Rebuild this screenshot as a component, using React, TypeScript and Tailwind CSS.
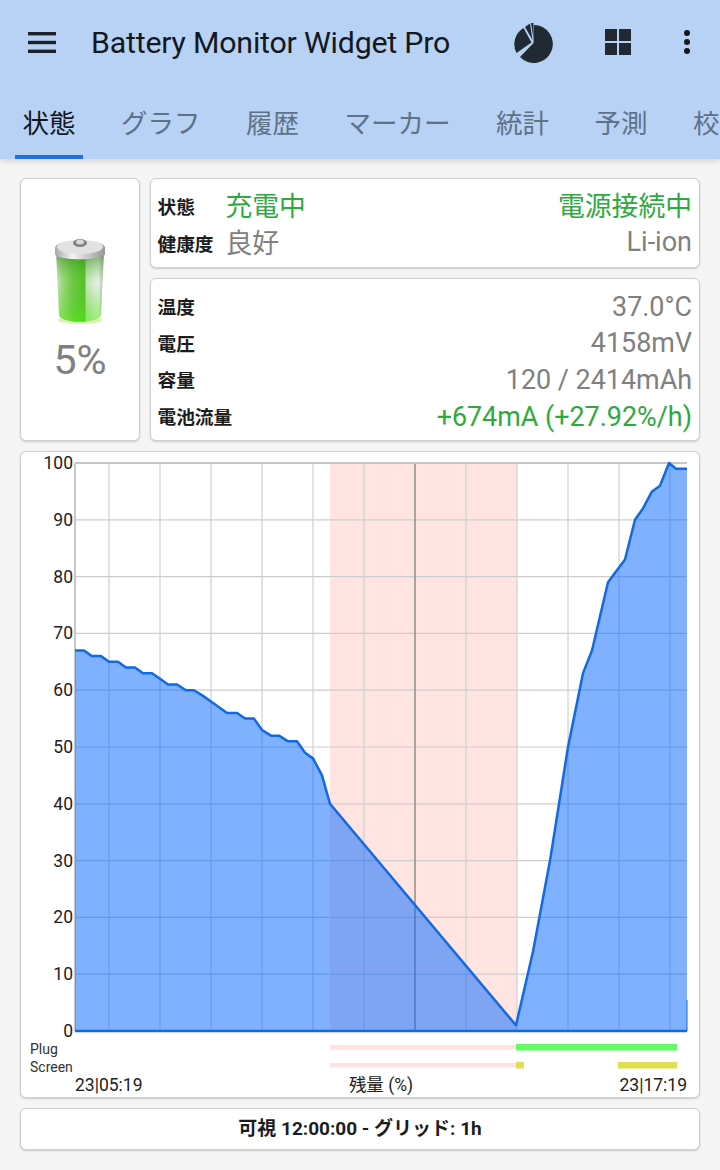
const FONT = "font-['Roboto','Noto_Sans_CJK_JP',sans-serif]";

// page coordinates, the svg viewBox below keeps the same numbers
const PLOT = { left: 75, right: 687, top: 463, bottom: 1031 };
const yOf = (v: number) => PLOT.bottom - (v / 100) * (PLOT.bottom - PLOT.top);

const curve: [number, number][] = [
  [75, 67], [84, 67], [92, 66], [101, 66], [109, 65], [118, 65], [126, 64], [135, 64],
  [143, 63], [152, 63], [160, 62], [168, 61], [177, 61], [186, 60], [194, 60], [203, 59],
  [211, 58], [219, 57], [227, 56], [237, 56], [245, 55], [254, 55], [262, 53], [271, 52],
  [279, 52], [288, 51], [297, 51], [305, 49], [313, 48], [322, 45], [330, 40], [516, 1],
  [533, 14], [550, 30], [568, 50], [583, 63], [592, 67], [608, 79], [625, 83], [635, 90],
  [643, 92], [652, 95], [660, 96], [669, 100], [676, 99], [687, 99],
];

const linePoints = curve.map(([x, v]) => `${x},${yOf(v)}`).join(' ');
const areaPoints = `${PLOT.left},${PLOT.bottom} ${linePoints} ${PLOT.right},${PLOT.bottom}`;
const gridX = [109, 160, 211, 262, 313, 364, 466, 517, 568, 619, 670];
const gridY = [10, 20, 30, 40, 50, 60, 70, 80, 90];
const labelsY = [0, 10, 20, 30, 40, 50, 60, 70, 80, 90, 100];
const tabs = ['状態', 'グラフ', '履歴', 'マーカー', '統計', '予測', '校正'];
const svgFont = "Roboto, 'Noto Sans CJK JP', sans-serif";

function PieIcon() {
  return (
    <svg width="42" height="42" viewBox="513 22 42 42" className="mt-[2px] block">
      <path d="M534 25 A19 19 0 1 1 520 57 L533.5 43 Z" fill="#212a33" />
      <path d="M516.5 53 A19 19 0 0 1 523.5 28 L531.5 42.5 Z" fill="#212a33" />
      <path d="M525 27 L530 23.5 L532.5 40 Z" fill="#212a33" />
      <path d="M531 23 L533.5 23 L533.5 39 Z" fill="#212a33" />
    </svg>
  );
}

function GridIcon() {
  return (
    <svg width="26" height="26" viewBox="0 0 26 26" className="block" fill="#212a33">
      <rect x="0" y="0" width="12" height="12" />
      <rect x="14" y="0" width="12" height="12" />
      <rect x="0" y="14" width="12" height="12" />
      <rect x="14" y="14" width="12" height="12" />
    </svg>
  );
}

function Battery() {
  return (
    <svg width="60" height="94" viewBox="0 0 60 94" className="block blur-[0.6px]">
      <defs>
        <linearGradient id="glass" x1="0" x2="1" y1="0" y2="0">
          <stop offset="0" stopColor="#dfe6da" />
          <stop offset="0.1" stopColor="#a8da8c" />
          <stop offset="0.35" stopColor="#6cc844" />
          <stop offset="0.6" stopColor="#52c226" />
          <stop offset="0.63" stopColor="#bfe4b4" />
          <stop offset="0.88" stopColor="#eaf3e6" />
          <stop offset="1" stopColor="#b4b8b4" />
        </linearGradient>
        <linearGradient id="shade" x1="0" x2="0" y1="0" y2="1">
          <stop offset="0" stopColor="#2a7018" stopOpacity="0.65" />
          <stop offset="0.45" stopColor="#5ac830" stopOpacity="0" />
          <stop offset="1" stopColor="#55ee10" stopOpacity="0.55" />
        </linearGradient>
        <linearGradient id="lid" x1="0" x2="1" y1="0" y2="0">
          <stop offset="0" stopColor="#a8a8a8" />
          <stop offset="0.35" stopColor="#f4f4f4" />
          <stop offset="1" stopColor="#989898" />
        </linearGradient>
      </defs>
      <ellipse cx="30" cy="83" rx="22" ry="4" fill="#c4ee90" opacity="0.7" />
      <path d="M6 14 L9 78 C10 87 50 87 51 78 L54 14 Z" fill="url(#glass)" />
      <path d="M6 14 L9 78 C10 87 50 87 51 78 L54 14 Z" fill="url(#shade)" />
      <path d="M5 11 C5 1 55 1 55 11 L55 17 C55 24 5 24 5 17 Z" fill="url(#lid)" />
      <ellipse cx="30" cy="10" rx="23" ry="7" fill="#e2e2e2" />
      <ellipse cx="30" cy="6" rx="7" ry="4" fill="#808080" />
      <ellipse cx="30" cy="5" rx="4" ry="2.5" fill="#d8d8d8" />
    </svg>
  );
}

function Card({ className, children }: { className?: string; children?: React.ReactNode }) {
  return (
    <div className={`rounded-md border border-[#cfcfcf] bg-white shadow-[0_1px_2px_rgba(0,0,0,0.18)] ${className ?? ''}`}>
      {children}
    </div>
  );
}

function Row({ label, value, tone = 'gray' }: { label: string; value: string; tone?: 'gray' | 'green' }) {
  return (
    <div className="flex h-[36.7px] items-center justify-between">
      <span className="pt-[2px] text-[18.7px] font-bold text-[#1c1c1c]">{label}</span>
      <span className={`text-[26.9px] ${tone === 'green' ? 'text-[#2fa83f]' : 'text-[#808080]'}`}>{value}</span>
    </div>
  );
}

function Chart() {
  return (
    <svg width="678" height="645" viewBox="21 452 678 645" className="block" fontFamily={svgFont}>
      <rect x="330" y={PLOT.top} width="187" height={PLOT.bottom - PLOT.top} fill="#ffe4e2" />
      {gridY.map((v) => (
        <line key={v} x1={PLOT.left} x2={PLOT.right} y1={yOf(v)} y2={yOf(v)} stroke="#cfcccc" strokeWidth="1.2" />
      ))}
      {gridX.map((x) => (
        <line key={x} x1={x} x2={x} y1={PLOT.top} y2={PLOT.bottom} stroke="#cfcfd4" strokeWidth="1.2" />
      ))}
      <line x1="415" x2="415" y1={PLOT.top} y2={PLOT.bottom} stroke="#8f8f8f" strokeWidth="1.5" />
      <line x1={PLOT.left} x2={PLOT.right} y1={PLOT.top} y2={PLOT.top} stroke="#c8c8c8" strokeWidth="2" />
      <line x1={PLOT.left} x2={PLOT.left} y1={PLOT.top} y2={PLOT.bottom} stroke="#c8c8c8" strokeWidth="2" />
      <polygon points={areaPoints} fill="#0063ff" fillOpacity="0.5" />
      <polyline points={linePoints} fill="none" stroke="#1169e6" strokeWidth="2.5" strokeLinejoin="round" />
      <line x1={PLOT.left} x2={PLOT.right} y1={PLOT.bottom} y2={PLOT.bottom} stroke="#1169e6" strokeWidth="2.5" />
      <line x1={PLOT.right} x2={PLOT.right} y1="1000" y2={PLOT.bottom} stroke="#1169e6" strokeWidth="1" />
      {labelsY.map((v) => (
        <text key={v} x="73" y={yOf(v) + 6} textAnchor="end" fontSize="17.5" fill="#222">
          {v}
        </text>
      ))}

      <rect x="330" y="1045" width="186" height="4.5" fill="#ffe2e0" />
      <rect x="330" y="1063" width="186" height="4.5" fill="#ffe2e0" />
      <rect x="516" y="1044" width="161" height="6.5" fill="#66fb66" />
      <rect x="516" y="1062" width="8" height="6.5" fill="#e0df50" />
      <rect x="618" y="1062" width="59" height="6.5" fill="#e0df50" />

      <text x="30" y="1054" fontSize="14" fill="#333">Plug</text>
      <text x="30" y="1072" fontSize="14" fill="#333">Screen</text>
      <text x="75" y="1091" fontSize="17.5" fill="#222">23|05:19</text>
      <text x="381" y="1091" textAnchor="middle" fontSize="17.5" fill="#222">残量 (%)</text>
      <text x="687" y="1091" textAnchor="end" fontSize="17.5" fill="#222">23|17:19</text>
    </svg>
  );
}

export default function App() {
  return (
    <div className={`h-[1170px] w-[720px] overflow-hidden bg-[#f5f5f5] ${FONT}`}>
      <header className="h-[159px] bg-[#b7d2f5] shadow-[0_2px_6px_rgba(0,0,0,0.14)]">
        <div className="flex h-[84px] items-center">
          <svg width="28" height="21" viewBox="0 0 28 21" className="ml-7 block" fill="#1d2228">
            <rect x="0" y="0" width="28" height="3.4" />
            <rect x="0" y="8.8" width="28" height="3.4" />
            <rect x="0" y="17.6" width="28" height="3.4" />
          </svg>
          <h1 className="ml-[35px] pt-[2px] text-[30.3px] font-normal tracking-[-0.2px] text-[#14181d]">Battery Monitor Widget Pro</h1>
          <div className="ml-auto flex items-center">
            <PieIcon />
            <div className="ml-[50px]">
              <GridIcon />
            </div>
            <div className="mr-[30px] ml-[53px] flex flex-col gap-[3px]">
              <span className="size-[6px] rounded-full bg-[#14181d]" />
              <span className="size-[6px] rounded-full bg-[#14181d]" />
              <span className="size-[6px] rounded-full bg-[#14181d]" />
            </div>
          </div>
        </div>
        <div className="flex h-[75px] gap-[45.5px] overflow-hidden pt-[11px] pl-[22.5px]">
          {tabs.map((tab, i) => (
            <div
              key={tab}
              className={`relative flex h-full shrink-0 items-center pb-[6px] text-[26.5px] ${i === 0 ? 'text-[#14181d]' : 'text-[#5f7186]'}`}
            >
              {tab}
              {i === 0 && <span className="absolute right-[-7.5px] bottom-0 left-[-7.5px] h-[4px] bg-[#1a73e8]" />}
            </div>
          ))}
        </div>
      </header>

      <main className="flex flex-col gap-[10px] px-5 pt-[19px]">
        <div className="flex h-[263px] gap-[10px]">
          <Card className="flex w-[120px] flex-col items-center justify-center">
            <Battery />
            <span className="mt-[6px] text-[41px] leading-[46px] text-[#808080]">5%</span>
          </Card>
          <div className="flex flex-1 flex-col gap-[10px]">
            <Card className="flex h-[90px] flex-col justify-center pt-[5px] pr-[7px] pl-[6.5px]">
              <div className="flex h-[37px] items-center">
                <span className="w-[68px] pt-[2px] text-[18.7px] font-bold text-[#1c1c1c]">状態</span>
                <span className="text-[26.8px] text-[#2fa83f]">充電中</span>
                <span className="ml-auto text-[26.8px] text-[#2fa83f]">電源接続中</span>
              </div>
              <div className="flex h-[37px] items-center">
                <span className="w-[68px] pt-[2px] text-[18.7px] font-bold text-[#1c1c1c]">健康度</span>
                <span className="text-[26.8px] text-[#808080]">良好</span>
                <span className="ml-auto pb-[4px] text-[27px] text-[#808080]">Li-ion</span>
              </div>
            </Card>
            <Card className="flex flex-1 flex-col justify-center pt-[5px] pr-[7px] pl-[6.5px]">
              <Row label="温度" value="37.0°C" />
              <Row label="電圧" value="4158mV" />
              <Row label="容量" value="120 / 2414mAh" />
              <Row label="電池流量" value="+674mA (+27.92%/h)" tone="green" />
            </Card>
          </div>
        </div>

        <Card className="h-[647px] overflow-hidden">
          <Chart />
        </Card>

        <Card className="flex h-[41.5px] items-center justify-center text-[19px] font-bold text-[#1c1c1c]">
          可視 12:00:00 - グリッド: 1h
        </Card>
      </main>
    </div>
  );
}
